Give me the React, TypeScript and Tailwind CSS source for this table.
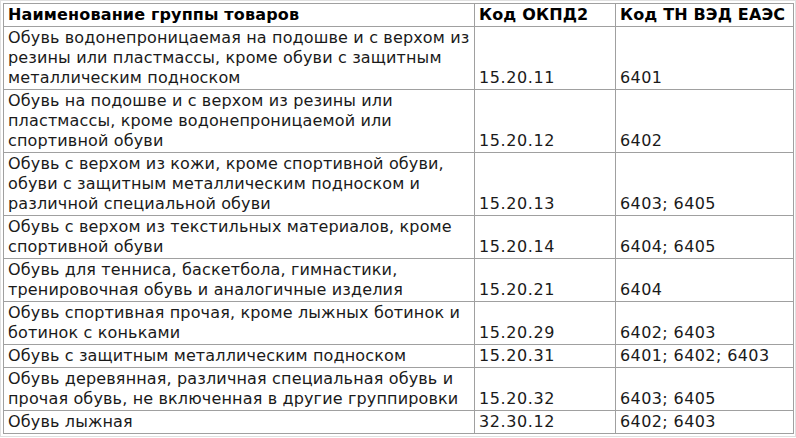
const rows: { name: string[]; okpd: string; tn: string }[] = [
  {
    name: [
      'Обувь водонепроницаемая на подошве и с верхом из',
      'резины или пластмассы, кроме обуви с защитным',
      'металлическим подноском',
    ],
    okpd: '15.20.11',
    tn: '6401',
  },
  {
    name: [
      'Обувь на подошве и с верхом из резины или',
      'пластмассы, кроме водонепроницаемой или',
      'спортивной обуви',
    ],
    okpd: '15.20.12',
    tn: '6402',
  },
  {
    name: [
      'Обувь с верхом из кожи, кроме спортивной обуви,',
      'обуви с защитным металлическим подноском и',
      'различной специальной обуви',
    ],
    okpd: '15.20.13',
    tn: '6403; 6405',
  },
  {
    name: ['Обувь с верхом из текстильных материалов, кроме', 'спортивной обуви'],
    okpd: '15.20.14',
    tn: '6404; 6405',
  },
  {
    name: ['Обувь для тенниса, баскетбола, гимнастики,', 'тренировочная обувь и аналогичные изделия'],
    okpd: '15.20.21',
    tn: '6404',
  },
  {
    name: ['Обувь спортивная прочая, кроме лыжных ботинок и', 'ботинок с коньками'],
    okpd: '15.20.29',
    tn: '6402; 6403',
  },
  {
    name: ['Обувь с защитным металлическим подноском'],
    okpd: '15.20.31',
    tn: '6401; 6402; 6403',
  },
  {
    name: [
      'Обувь деревянная, различная специальная обувь и',
      'прочая обувь, не включенная в другие группировки',
    ],
    okpd: '15.20.32',
    tn: '6403; 6405',
  },
  {
    name: ['Обувь лыжная'],
    okpd: '32.30.12',
    tn: '6402; 6403',
  },
];

const cell = 'border border-[#a0a0a0] px-[4px] pt-[1px] pb-[1px] align-bottom leading-[20px]';

export default function App() {
  return (
    <div className="w-[796px] h-[438px] bg-white overflow-hidden font-['DejaVu_Sans',sans-serif]">
      <div className="border border-[#e0e0e0] p-[2px] w-[796px]">
        <table className="table-fixed border-collapse w-[790px] text-[16px] tracking-[0.15px] text-[#1a1a1a]">
          <colgroup>
            <col className="w-[471px]" />
            <col className="w-[141px]" />
            <col className="w-[178px]" />
          </colgroup>
          <thead>
            <tr className="font-bold text-black">
              <th className={`${cell} text-left`}>Наименование группы товаров</th>
              <th className={`${cell} text-left`}>Код ОКПД2</th>
              <th className={`${cell} text-left`}>Код ТН ВЭД ЕАЭС</th>
            </tr>
          </thead>
          <tbody>
            {rows.map((r) => (
              <tr key={r.okpd}>
                <td className={cell}>
                  {r.name.map((line, i) => (
                    <div key={i} className="whitespace-nowrap">
                      {line}
                    </div>
                  ))}
                </td>
                <td className={`${cell} tracking-[0.6px]`}>{r.okpd}</td>
                <td className={`${cell} tracking-[0.4px]`}>{r.tn}</td>
              </tr>
            ))}
          </tbody>
        </table>
      </div>
    </div>
  );
}
